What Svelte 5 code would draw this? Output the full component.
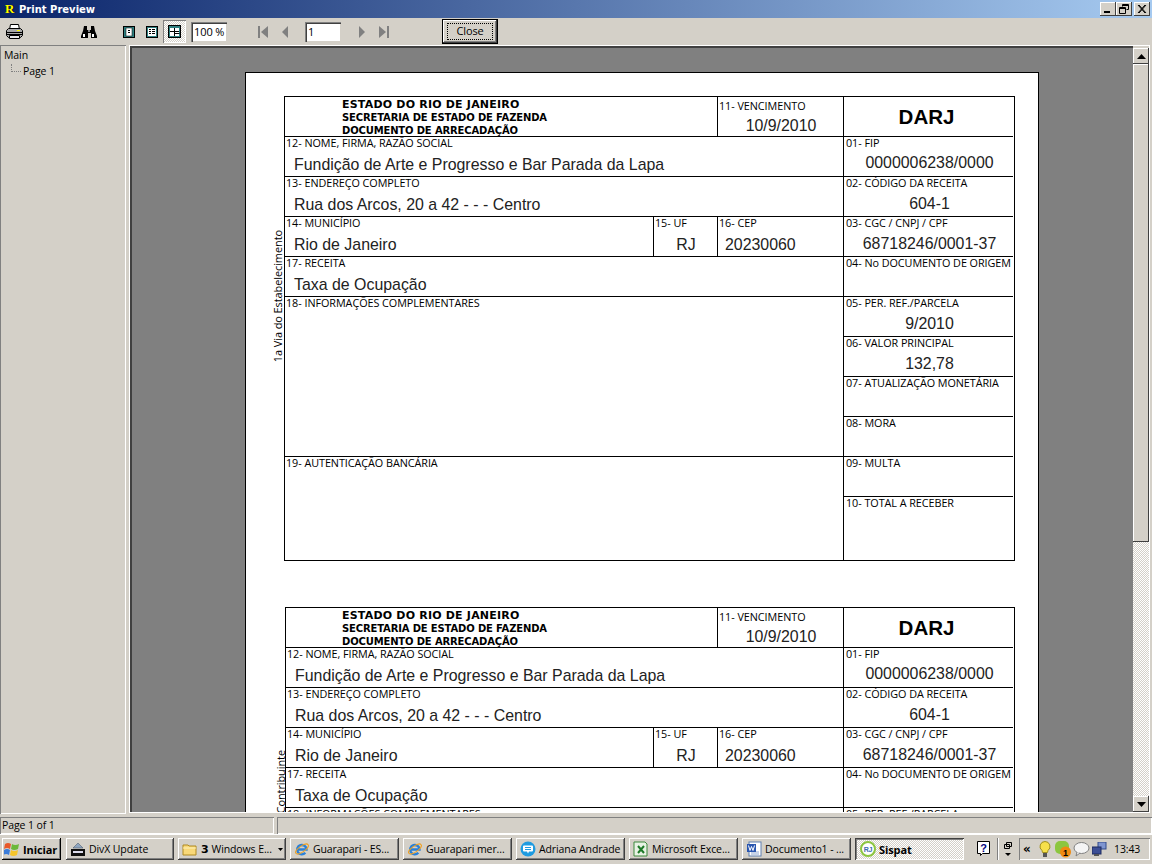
<script>
  const forms = [
    { cls: 'first', side: '1a Via do Estabelecimento', sideTop: 133, sideLeft: -13 },
    { cls: 'second', side: 'Contribuinte', sideTop: 142, sideLeft: -11 }
  ];
  const left = [
    { l: '12- NOME, FIRMA, RAZÃO SOCIAL', v: 'Fundição de Arte e Progresso e Bar Parada da Lapa', c: '1 / 4', r: '2' },
    { l: '13- ENDEREÇO COMPLETO', v: 'Rua dos Arcos, 20 a 42 - - - Centro', c: '1 / 4', r: '3' },
    { l: '14- MUNICÍPIO', v: 'Rio de Janeiro', c: '1', r: '4' },
    { l: '15- UF', v: 'RJ', c: '2', r: '4', center: true },
    { l: '16- CEP', v: '20230060', c: '3', r: '4', tight: true },
    { l: '17- RECEITA', v: 'Taxa de Ocupação', c: '1 / 4', r: '5' },
    { l: '18- INFORMAÇÕES COMPLEMENTARES', v: '', c: '1 / 4', r: '6 / 10' },
    { l: '19- AUTENTICAÇÃO BANCÁRIA', v: '', c: '1 / 4', r: '10 / 12', end: true }
  ];
  const right = [
    { l: '01- FIP', v: '0000006238/0000' },
    { l: '02- CÓDIGO DA RECEITA', v: '604-1' },
    { l: '03- CGC / CNPJ / CPF', v: '68718246/0001-37' },
    { l: '04- No DOCUMENTO DE ORIGEM', v: '' },
    { l: '05- PER. REF./PARCELA', v: '9/2010' },
    { l: '06- VALOR PRINCIPAL', v: '132,78' },
    { l: '07- ATUALIZAÇÃO MONETÁRIA', v: '' },
    { l: '08- MORA', v: '' },
    { l: '09- MULTA', v: '' },
    { l: '10- TOTAL A RECEBER', v: '' }
  ];
</script>

{#snippet ieIcon()}
  <svg width="16" height="16" viewBox="0 0 16 16"><path d="M3.500 8.500h9a4.700 4.700 0 1 0-1.200 3.300" fill="none" stroke="#2a80d8" stroke-width="2.400"/><ellipse cx="8" cy="8" rx="7.500" ry="3" fill="none" stroke="#f0a020" transform="rotate(-35 8 8)"/></svg>
{/snippet}

<div class="window">
  <header class="title">
    <div class="title-left">
      <span class="r-logo">R</span>
      <span class="title-text">Print Preview</span>
    </div>
    <div class="caption-btns">
      <button class="cap" aria-label="min"><svg width="16" height="14"><rect x="4" y="9" width="6" height="2" fill="#000"/></svg></button>
      <button class="cap" aria-label="restore"><svg width="16" height="14"><path d="M6.5 2.500h6v5h-2M6.500 2.500v2M6.500 3.500h6" fill="none" stroke="#000"/><path d="M3.500 5.500h6v6h-6zM3.500 6.500h6" fill="none" stroke="#000"/></svg></button>
      <button class="cap close" aria-label="close"><svg width="16" height="14"><path d="M4 3l7 8M5 3l7 8M11 3l-7 8M12 3l-7 8" stroke="#000" fill="none"/></svg></button>
    </div>
  </header>

  <div class="toolbar">
    <svg class="tb printer" width="17" height="15" viewBox="0 0 17 15">
      <path d="M4.500.5h8l1 5h-10z" fill="#fff" stroke="#000"/>
      <path d="M.5 6.500l2-2h12l2 2v5l-2 2h-12l-2-2z" fill="#a8a8a8" stroke="#000"/>
      <path d="M1 8.500h15M1 10.500h15" stroke="#000"/><path d="M3.500 11.500h10v3h-10z" fill="#e8e8e8" stroke="#000"/>
      <rect x="11" y="6" width="3" height="1" fill="#ff0"/>
    </svg>
    <svg class="tb binoc" width="16" height="14" viewBox="0 0 16 14">
      <path d="M3 1h3v4h4V1h3l1 5 2 5v2h-6V8H7v5H0v-2l2-5z" fill="#000"/>
      <rect x="2" y="9" width="2" height="3" fill="#fff"/><rect x="11" y="9" width="2" height="3" fill="#fff"/>
      <rect x="7" y="5" width="2" height="2" fill="#888"/>
    </svg>
    <svg class="pgi" width="12" height="12" viewBox="0 0 12 12"><rect x=".5" y=".5" width="11" height="11" fill="#2f8080" stroke="#000"/><rect x="3" y="2" width="6" height="8" fill="#fff" stroke="#000" stroke-width=".5"/><rect x="5" y="4" width="2" height="1"/><rect x="5" y="6" width="2" height="1"/></svg>
    <svg class="pgi two" width="12" height="12" viewBox="0 0 12 12"><rect x=".5" y=".5" width="11" height="11" fill="#2f8080" stroke="#000"/><rect x="2" y="2" width="8" height="8" fill="#fff"/><path d="M3 3.500h2M6 3.500h3M3 5.500h2M6 5.500h3M3 7.500h2M6 7.500h3" stroke="#000"/></svg>
    <span class="pg-pressed"><svg width="13" height="13" viewBox="0 0 13 13"><rect x=".5" y=".5" width="12" height="12" fill="#2f8080" stroke="#000"/><rect x="2" y="3" width="9" height="8" fill="#fff"/><path d="M6.500 3v8M2 6.500h9M6.500 8.500h5" stroke="#000"/></svg></span>
    <span class="edit zoom-edit">100 %</span>
    <div class="nav first-nav">
      <svg width="14" height="12"><rect x="1" y="0" width="2" height="12" fill="#808080"/><path d="M11 0v12L4 6z" fill="#808080"/></svg>
      <svg width="10" height="12"><path d="M7 0v12L1 6z" fill="#808080"/></svg>
    </div>
    <span class="edit page-edit">1</span>
    <div class="nav last-nav">
      <svg width="10" height="12"><path d="M1 0v12l6-6z" fill="#808080"/></svg>
      <svg width="14" height="12"><path d="M1 0v12l7-6z" fill="#808080"/><rect x="9" y="0" width="2" height="12" fill="#808080"/></svg>
    </div>
    <button class="close-btn"><span>Close</span></button>
  </div>

  <main class="main">
    <aside class="tree">
      <div>Main</div>
      <div class="leaf"><span class="dots"></span>Page 1</div>
    </aside>
    <section class="preview">
      <div class="canvas">
        <div class="page">
          {#each forms as f}
            <div class="form {f.cls}">
              <span class="side" style="top:{f.sideTop}px;left:{f.sideLeft}px">{f.side}</span>
              <div class="cell head">
                <div class="h1">ESTADO DO RIO DE JANEIRO</div>
                <div class="h2">SECRETARIA DE ESTADO DE FAZENDA</div>
                <div class="h2">DOCUMENTO DE ARRECADAÇÃO</div>
              </div>
              <div class="cell venc">
                <div class="lbl">11- VENCIMENTO</div>
                <div class="val center">10/9/2010</div>
              </div>
              <div class="cell darj">DARJ</div>
              {#each left as c}
                <div class="cell" class:end={c.end} style="grid-column:{c.c};grid-row:{c.r}">
                  <div class="lbl">{c.l}</div>
                  {#if c.v}<div class="val" class:center={c.center} class:tight={c.tight}>{c.v}</div>{/if}
                </div>
              {/each}
              {#each right as c, i}
                <div class="cell rt" class:last={i === 9} style="grid-column:4;grid-row:{i + 2}">
                  <div class="lbl">{c.l}</div>
                  {#if c.v}<div class="val center rv" class:fip={i === 0}>{c.v}</div>{/if}
                </div>
              {/each}
            </div>
          {/each}
        </div>
      </div>
      <div class="vscroll">
        <span class="sb-btn"><svg width="9" height="5"><path d="M4.500 0L9 5H0z" fill="#000"/></svg></span>
        <span class="thumb"></span>
        <span class="track"></span>
        <span class="sb-btn"><svg width="9" height="5"><path d="M0 0h9L4.500 5z" fill="#000"/></svg></span>
      </div>
    </section>
  </main>

  <div class="status">
    <span class="st a">Page 1 of 1</span>
    <span class="st b"></span>
  </div>

  <footer class="taskbar">
    <button class="tbtn start">
      <svg width="17" height="16" viewBox="0 0 17 16"><path d="M1 3q3-2 6 0l-1 5q-3-2-6 0z" fill="#e8582a"/><path d="M8 3q3 2 7 0l-1 5q-4 2-7 0z" fill="#6cb83a"/><path d="M0 9q3-2 6 0l-1 5q-3-2-6 0z" fill="#3a7bd8"/><path d="M7 9q3 2 7 0l-1 5q-4 2-7 0z" fill="#f5c52c"/></svg>
      <b>Iniciar</b>
    </button>
    <button class="tbtn narrow">
      <svg width="16" height="16" viewBox="0 0 16 16"><path d="M3 7l5-5 5 5z" fill="#8fa6c0" stroke="#506070" stroke-width=".6"/><rect x="1" y="8" width="14" height="7" fill="#111"/><rect x="3" y="10" width="10" height="2" fill="#dde"/></svg>
      DivX Update
    </button>
    <button class="tbtn group narrow">
      <svg width="16" height="14" viewBox="0 0 16 14"><path d="M1 3h5l1 1h7v9H1z" fill="#f8d878" stroke="#b08a20"/><path d="M1 6h13" stroke="#fff2b8"/></svg>
      <b class="n">3</b> <span class="tl">Windows E...</span>
      <svg class="dd" width="5" height="3"><path d="M0 0h5L2.500 3z" fill="#000"/></svg>
    </button>
    <button class="tbtn">
      {@render ieIcon()}
      <span class="tl">Guarapari - ES...</span>
    </button>
    <button class="tbtn">
      {@render ieIcon()}
      <span class="tl">Guarapari mer...</span>
    </button>
    <button class="tbtn">
      <svg width="16" height="16" viewBox="0 0 16 16"><circle cx="8" cy="8" r="7.500" fill="#1e9be0"/><path d="M4 4.500h8a1 1 0 0 1 1 1v4a1 1 0 0 1-1 1H9l-1 2-1-2H4a1 1 0 0 1-1-1v-4a1 1 0 0 1 1-1z" fill="#fff"/><path d="M5 6.500h6M5 8.500h6" stroke="#1e9be0"/></svg>
      <span class="tl">Adriana Andrade</span>
    </button>
    <button class="tbtn">
      <svg width="16" height="16" viewBox="0 0 16 16"><path d="M1 1h11l2 2v12H1z" fill="#e8f2e4" stroke="#3d8a3d"/><path d="M5 5l6 7M11 5l-6 7" stroke="#1d7a28" stroke-width="2"/></svg>
      <span class="tl">Microsoft Exce...</span>
    </button>
    <button class="tbtn">
      <svg width="16" height="16" viewBox="0 0 16 16"><rect x="3" y="1" width="12" height="14" fill="#fff" stroke="#6080b0"/><path d="M5 11h8M5 13h8" stroke="#90a8d0"/><rect x="1" y="3" width="9" height="8" fill="#2a56b0"/><path d="M2.500 4.500l1.500 5 1.500-4 1.500 4 1.500-5" stroke="#fff" fill="none"/></svg>
      <span class="tl">Documento1 - ...</span>
    </button>
    <button class="tbtn active">
      <svg width="16" height="16" viewBox="0 0 16 16"><circle cx="8" cy="8" r="7" fill="#fff" stroke="#8cc63f" stroke-width="2"/><text x="8" y="11" class="rj">RJ</text></svg>
      <b>Sispat</b>
    </button>
    <div class="help"><svg width="14" height="16" viewBox="0 0 14 16"><path d="M.5.5h12v12h-7l-2 2v-2h-3z" fill="#fff" stroke="#000"/><text x="6.500" y="10.500" class="q">?</text></svg></div>
    <span class="vsep"></span>
    <div class="grip"><svg width="10" height="16"><path d="M3.500 1.500h5v4h-5zM1.500 3.500h5v4h-5z" fill="#d4d0c8" stroke="#000"/><path d="M2 12h6l-3 3z" fill="#000"/></svg></div>
    <div class="tray">
      <span class="chev">«</span>
      <svg class="ti bulb" width="12" height="17" viewBox="0 0 12 17"><path d="M6 .5a5 5 0 0 1 3 9l-.5 2h-5l-.5-2a5 5 0 0 1 3-9z" fill="#f6e04a" stroke="#a09020"/><rect x="4" y="12" width="4" height="4" fill="#555"/></svg>
      <svg class="ti green" width="18" height="17" viewBox="0 0 18 17"><rect x="0" y="0" width="14" height="13" rx="5" fill="#8cc63f"/><circle cx="10.500" cy="11" r="5.500" fill="#f08a10"/><text x="10.500" y="14.500" class="one1">1</text></svg>
      <svg class="ti" width="17" height="15" viewBox="0 0 17 15"><ellipse cx="8.500" cy="6" rx="7.500" ry="5.500" fill="#f4f4f4" stroke="#808080"/><path d="M4 10l-1 4 4-3" fill="#f4f4f4" stroke="#808080"/></svg>
      <svg class="ti net" width="15" height="15" viewBox="0 0 15 15"><rect x="6" y="0" width="8" height="7" fill="#7f95d0" stroke="#334a8a"/><rect x="0" y="5" width="9" height="7" fill="#3d4f95" stroke="#1d2a60"/><rect x="2" y="12" width="5" height="2" fill="#555"/></svg>
      <span class="clock">13:43</span>
    </div>
  </footer>
</div>

<style>
  :global(body) { margin: 0; background: #d4d0c8; }
  .window { width: 1152px; height: 864px; display: flex; flex-direction: column; overflow: hidden; background: #d4d0c8; font-family: "Open Sans", "Liberation Sans", sans-serif; font-size: 10.500px; color: #000; letter-spacing: -.1px; }
  button { font: inherit; color: inherit; padding: 0; margin: 0; letter-spacing: inherit; }

  .title { height: 18px; flex: none; display: flex; justify-content: space-between; align-items: center; background: linear-gradient(90deg, #0a246a 0%, #a6caf0 100%); }
  .title-left { display: flex; align-items: center; gap: 3px; padding-left: 5px; }
  .r-logo { font: bold 13px/14px "Liberation Serif", serif; color: #ff0; width: 11px; text-shadow: 1px 0 #000; }
  .title-text { color: #fff; font-family: "DejaVu Sans", sans-serif; font-weight: 700; font-size: 10px; letter-spacing: 0; }
  .caption-btns { display: flex; padding-right: 2px; margin-top: -1px; }
  .cap { width: 16px; height: 14px; background: #d4d0c8; border: none; box-shadow: inset -1px -1px #404040, inset 1px 1px #fff; display: block; }
  .cap svg { display: block; }
  .close { margin-left: 2px; }

  .toolbar { height: 27px; flex: none; display: flex; align-items: center; position: relative; }
  .tb { flex: none; }
  .printer { margin-left: 6px; margin-right: 1px; }
  .binoc { margin-left: 57px; margin-right: 26px; }
  .pgi { flex: none; display: block; }
  .pgi.two { margin-left: 11px; }
  .pg-pressed { width: 23px; height: 23px; margin-left: 5px; display: grid; place-items: center; box-shadow: inset 1px 1px #808080, inset -1px -1px #fff; background: repeating-conic-gradient(#fff 0 25%, #d4d0c8 0 50%) 0 0 / 2px 2px; flex: none; }
  .pg-pressed svg { display: block; }
  .edit { display: block; height: 20px; line-height: 19px; background: #fff; box-shadow: inset 1px 1px #808080, inset 2px 2px #404040, inset -1px -1px #d4d0c8; padding-left: 3px; box-sizing: border-box; flex: none; font-size: 11px; }
  .zoom-edit { width: 36px; margin-left: 5px; }
  .page-edit { width: 36px; margin-left: 14px; }
  .nav { display: flex; align-items: center; flex: none; }
  .nav svg { display: block; }
  .first-nav { margin-left: 30px; gap: 10px; }
  .last-nav { margin-left: 17px; gap: 10px; }
  .close-btn { width: 56px; height: 25px; margin-left: 50px; background: #d4d0c8; border: 1px solid #000; box-shadow: inset -1px -1px #404040, inset 1px 1px #fff, inset -2px -2px #808080; flex: none; display: grid; place-items: center; font-size: 11px; }
  .close-btn span { outline: 1px dotted #000; outline-offset: 0; width: 44px; height: 15px; line-height: 14px; display: block; }

  .main { height: 769px; flex: none; display: flex; gap: 3px; padding-right: 2px; box-sizing: border-box; }
  .tree { width: 126px; box-sizing: border-box; flex: none; box-shadow: inset 1px 1px #808080, inset -1px -1px #fff; padding: 2px 0 0 4px; line-height: 16px; font-size: 10.500px; }
  .leaf { padding-left: 7px; display: flex; align-items: center; gap: 2px; }
  .dots { width: 10px; height: 8px; margin-top: -6px; border-left: 1px dotted #808080; border-bottom: 1px dotted #808080; box-sizing: border-box; }
  .preview { flex: 1; min-width: 0; display: flex; box-shadow: inset 0 0 0 1px #fff; padding: 1px; margin-bottom: 1px; }
  .canvas { flex: 1; min-width: 0; background: #808080; overflow: hidden; border: 2px solid #404040; border-right: 0; border-bottom: 0; padding: 24px 0 0 113px; box-sizing: border-box; }
  .page { width: 794px; height: 900px; background: #fff; border: 1px solid #000; box-sizing: border-box; padding: 23px 0 0 38px; letter-spacing: 0; }

  .form { display: grid; width: 731px; height: 465px; grid-template-columns: 369px 64px 126px 170px; grid-template-rows: repeat(10, 40px) 63px; border: 1px solid #000; box-sizing: border-box; position: relative; font-family: "Liberation Sans", sans-serif; }
  .form.second { width: 730px; margin: 46px 0 0 1px; grid-template-columns: 368px 64px 126px 170px; }
  .cell { border-bottom: 1px solid #000; border-right: 1px solid #000; box-sizing: border-box; padding: 0 0 0 1px; min-width: 0; position: relative; }
  .end { border-bottom: 0; }
  .head { grid-column: 1 / 3; grid-row: 1; padding: 1px 0 0 57px; font-family: "DejaVu Sans", sans-serif; font-weight: 700; }
  .second .head { padding-left: 56px; }
  .h1 { font-size: 11px; line-height: 13px; letter-spacing: .2px; }
  .h2 { font-size: 10px; line-height: 13px; letter-spacing: -.15px; }
  .venc { grid-column: 3; grid-row: 1; }
  .venc .lbl { padding-top: 3px; }
  .venc .val { margin-top: 5px; }
  .darj { grid-column: 4; grid-row: 1; border-right: 0; margin-right: 1px; text-align: center; font-weight: 700; font-size: 20.500px; line-height: 40px; font-family: "Liberation Sans", sans-serif; padding: 0 4px 0 0; }
  .lbl { font-family: "Open Sans", "Liberation Sans", sans-serif; font-size: 10.800px; line-height: 12px; white-space: nowrap; letter-spacing: -.05px; }
  .val { font-size: 15.900px; line-height: 18px; margin-top: 7px; padding-left: 8px; white-space: nowrap; color: #222; }
  .val.tight { padding-left: 6px; }
  .val.center { text-align: center; padding: 0; }
  .rv { margin-top: 6px; }
  .rv.fip { margin-top: 5px; }
  .rt { border-right: 0; margin-right: 1px; padding-left: 2px; }
  .last { border-bottom: 0; }
  .side { position: absolute; writing-mode: vertical-rl; transform: rotate(180deg); font-family: "Open Sans", "Liberation Sans", sans-serif; font-size: 11px; line-height: 12px; white-space: nowrap; letter-spacing: -.1px; }

  .vscroll { width: 16px; flex: none; display: flex; flex-direction: column; padding-top: 2px; box-sizing: border-box; background: #d4d0c8; }
  .sb-btn { height: 16px; flex: none; display: grid; place-items: center; background: #d4d0c8; box-shadow: inset -1px -1px #404040, inset 1px 1px #fff; }
  .sb-btn svg { display: block; }
  .thumb { height: 478px; flex: none; background: #d4d0c8; box-shadow: inset -1px -1px #404040, inset 1px 1px #fff; }
  .track { flex: 1; background: repeating-conic-gradient(#fff 0 25%, #d4d0c8 0 50%) 0 0 / 2px 2px; }

  .status { height: 20px; flex: none; display: flex; gap: 3px; padding-top: 3px; box-sizing: border-box; }
  .st { display: block; box-shadow: inset 1px 1px #808080, inset -1px -1px #fff; line-height: 17px; padding-left: 2px; box-sizing: border-box; height: 17px; font-size: 10.500px; }
  .st.a { width: 274px; }
  .st.b { flex: 1; }

  .taskbar { height: 30px; flex: none; display: flex; align-items: flex-start; gap: 4px; padding: 3px 0 0 2px; border-top: 1px solid #fff; box-sizing: border-box; font-size: 10.500px; }
  .tbtn { width: 109px; height: 22px; flex: none; display: flex; align-items: center; gap: 3px; padding-left: 4px; background: #d4d0c8; border: none; box-shadow: inset -1px -1px #404040, inset 1px 1px #fff, inset -2px -2px #808080; white-space: nowrap; box-sizing: border-box; font-size: 10.500px; }
  .tbtn.narrow { width: 108px; }
  .tbtn svg { flex: none; }
  .start { width: 59px; padding-left: 2px; gap: 2px; margin-right: 1px; box-shadow: inset -1px -1px #000, inset 1px 1px #fff, inset -2px -2px #808080; font-size: 11px; }
  .group { position: relative; }
  .n { font-family: "DejaVu Sans", sans-serif; font-size: 11px; }
  .dd { position: absolute; right: 3px; top: 10px; }
  .active { padding-left: 5px; background: repeating-conic-gradient(#fff 0 25%, #d4d0c8 0 50%) 0 0 / 2px 2px; box-shadow: inset 1px 1px #404040, inset -1px -1px #fff, inset 2px 2px #808080; }
  .active b { font-size: 11px; }
  .rj { font: bold 7px "Liberation Sans", sans-serif; fill: #3a6ab0; text-anchor: middle; }
  .q { font: bold 11px "Liberation Sans", sans-serif; fill: #000080; text-anchor: middle; }
  .one1 { font: bold 9px "Liberation Sans", sans-serif; fill: #000; text-anchor: middle; }
  .help { margin: 3px 0 0 9px; width: 14px; height: 16px; flex: none; }
  .help svg, .grip svg { display: block; }
  .vsep { width: 1px; height: 22px; background: #808080; box-shadow: 1px 0 #fff; margin-left: 2px; flex: none; }
  .grip { width: 10px; margin: 3px 0 0 1px; flex: none; }
  .tray { width: 131px; height: 22px; margin-left: 2px; box-shadow: inset 1px 1px #808080, inset -1px -1px #fff; flex: none; display: flex; align-items: center; box-sizing: border-box; padding-left: 4px; }
  .ti { flex: none; display: block; }
  .bulb { margin-left: 1px; }
  .green { margin-left: 4px; }
  .net { margin-left: 2px; }
  .chev { font: bold 12px "DejaVu Sans", sans-serif; width: 15px; flex: none; }
  .clock { margin-left: 7px; font-size: 10.500px; white-space: nowrap; }
</style>
